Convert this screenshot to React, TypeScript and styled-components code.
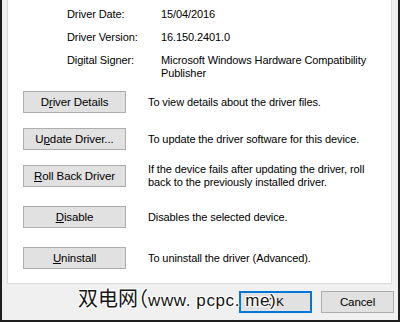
import React from "react";
import styled, { createGlobalStyle } from "styled-components";

const Global = createGlobalStyle`
  html, body { margin: 0; padding: 0; background: #f0f0f0; }
  body {
    font-family: "Liberation Sans", Arial, sans-serif;
    font-size: 11px;
    letter-spacing: -0.1px;
    color: #000;
  }
`;

const Window = styled.div`
  position: relative;
  width: 400px;
  height: 322px;
  box-sizing: border-box;
  background: #f0f0f0;
  border-left: 2px solid #1e1e1e;
  border-right: 2px solid #1e1e1e;
  border-bottom: 2px solid #1e1e1e;
  display: flex;
  flex-direction: column;
  overflow: hidden;
`;

const Panel = styled.div`
  margin-left: 5px;
  margin-right: 6px;
  height: 284px;
  box-sizing: border-box;
  background: #fff;
  border: 1px solid #d9d9d9;
  border-top: none;
  display: flex;
  flex-direction: column;
  padding-top: 8px;
`;

const Info = styled.div`
  display: grid;
  grid-template-columns: 94px 1fr;
  row-gap: 10px;
  padding-left: 59px;
  line-height: 13px;
`;

const Label = styled.div``;
const Value = styled.div``;

const Actions = styled.div`
  display: flex;
  flex-direction: column;
  padding-left: 15px;
`;

const Row = styled.div<{ $top: number }>`
  display: flex;
  align-items: center;
  height: 22px;
  margin-top: ${(p) => p.$top}px;
`;

const Button = styled.div<{ $w?: number; $focus?: boolean }>`
  width: ${(p) => p.$w ?? 103}px;
  height: 22px;
  box-sizing: border-box;
  flex-shrink: 0;
  background: #e1e1e1;
  border: ${(p) => (p.$focus ? "2px solid #0078d7" : "1px solid #adadad")};
  display: flex;
  align-items: center;
  justify-content: center;
  line-height: 14px;
  font-size: 11.5px;
`;

const U = styled.span`
  text-decoration: underline;
  text-underline-offset: 1px;
`;

const Desc = styled.div`
  margin-left: 22px;
  line-height: 13px;
  white-space: nowrap;
`;

const Footer = styled.div`
  display: flex;
  justify-content: flex-end;
  gap: 9px;
  padding-top: 7px;
  padding-right: 4px;
`;

const Watermark = styled.div`
  position: absolute;
  left: 76px;
  top: 284px;
  font-family: "Liberation Sans", "Noto Sans CJK SC", sans-serif;
  font-size: 17px;
  line-height: 28px;
  color: #151515;
  white-space: nowrap;
  letter-spacing: 0.6px;
  text-shadow: 1px 1px 0 #fff, -1px -1px 0 #fff, 1px -1px 0 #fff, -1px 1px 0 #fff;
`;

const Han = styled.span`
  font-family: "Noto Sans CJK SC", sans-serif;
  font-size: 20px;
  letter-spacing: 0;
  font-feature-settings: "halt";
`;

export default function App() {
  return (
    <>
      <Global />
      <Window>
        <Panel>
          <Info>
            <Label>Driver Date:</Label>
            <Value>15/04/2016</Value>
            <Label>Driver Version:</Label>
            <Value>16.150.2401.0</Value>
            <Label>Digital Signer:</Label>
            <Value>
              Microsoft Windows Hardware Compatibility
              <br />
              Publisher
            </Value>
          </Info>
          <Actions>
            <Row $top={11}>
              <Button>
                <span>
                  D<U>r</U>iver Details
                </span>
              </Button>
              <Desc>To view details about the driver files.</Desc>
            </Row>
            <Row $top={15}>
              <Button>
                <span>
                  U<U>p</U>date Driver...
                </span>
              </Button>
              <Desc>To update the driver software for this device.</Desc>
            </Row>
            <Row $top={15}>
              <Button>
                <span>
                  <U>R</U>oll Back Driver
                </span>
              </Button>
              <Desc>
                If the device fails after updating the driver, roll
                <br />
                back to the previously installed driver.
              </Desc>
            </Row>
            <Row $top={19}>
              <Button>
                <span>
                  <U>D</U>isable
                </span>
              </Button>
              <Desc>Disables the selected device.</Desc>
            </Row>
            <Row $top={19}>
              <Button>
                <span>
                  <U>U</U>ninstall
                </span>
              </Button>
              <Desc>To uninstall the driver (Advanced).</Desc>
            </Row>
          </Actions>
        </Panel>
        <Footer>
          <Button $w={73} $focus>
            OK
          </Button>
          <Button $w={73}>Cancel</Button>
        </Footer>
        <Watermark>
          <Han>双电网（</Han>www. pcpc. me)
        </Watermark>
      </Window>
    </>
  );
}
